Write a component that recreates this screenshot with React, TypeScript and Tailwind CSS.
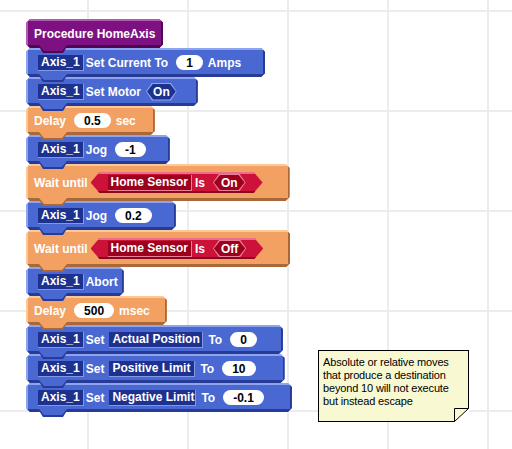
import type { ReactNode } from 'react';

type Tone = 'blue' | 'orange' | 'purple';

// block colours: body + bevel (light top/left, dark bottom/right)
const TONES: Record<Tone, { body: string; tabOuter: string; tabInner: string }> = {
  blue: {
    body: 'bg-[#4a68d2] shadow-[inset_2px_2px_0_#8fa4ee,inset_-2px_-3px_0_#263b96]',
    tabOuter: 'bg-[#263b96]',
    tabInner: 'bg-[#4a68d2]',
  },
  orange: {
    body: 'bg-[#f3a163] shadow-[inset_2px_2px_0_#fbc999,inset_-2px_-3px_0_#a9683a]',
    tabOuter: 'bg-[#a9683a]',
    tabInner: 'bg-[#f3a163]',
  },
  purple: {
    body: 'bg-[#7e1181] shadow-[inset_2px_2px_0_#b25bb5,inset_-2px_-3px_0_#4f0651]',
    tabOuter: 'bg-[#4f0651]',
    tabInner: 'bg-[#7e1181]',
  },
};

const CUT =
  '[clip-path:polygon(4px_0,calc(100%_-_4px)_0,100%_4px,100%_calc(100%_-_4px),calc(100%_-_4px)_100%,4px_100%,0_calc(100%_-_4px),0_4px)]';
const TRAP = '[clip-path:polygon(0_0,100%_0,calc(100%_-_5px)_100%,5px_100%)]';
const HEX9 =
  '[clip-path:polygon(9px_0,calc(100%_-_9px)_0,100%_50%,calc(100%_-_9px)_100%,9px_100%,0_50%)]';
const HEX6 =
  '[clip-path:polygon(6px_0,calc(100%_-_6px)_0,100%_50%,calc(100%_-_6px)_100%,6px_100%,0_50%)]';

function Block({
  tone,
  tall,
  pr,
  children,
}: {
  tone: Tone;
  tall?: boolean;
  pr: string;
  children: ReactNode;
}) {
  const t = TONES[tone];
  return (
    <div className={`relative ${tall ? 'h-[37px]' : 'h-[29px]'}`}>
      <div className={`flex h-full items-center gap-[5px] whitespace-nowrap pl-2 ${pr} ${t.body} ${CUT}`}>
        {children}
      </div>
      {/* connector tab that drops into the next block */}
      <div className={`absolute left-[12px] top-[calc(100%_-_3px)] z-10 h-[8px] w-[30px] ${t.tabOuter} ${TRAP}`}>
        <div className={`mx-[1px] h-[6px] ${t.tabInner} ${TRAP}`} />
      </div>
    </div>
  );
}

function Axis() {
  return (
    <span className="-mr-[3px] ml-[4px] flex h-[16px] items-center border-b border-r border-[#8297e6] bg-[#1d318f] px-[3px]">
      Axis_1
    </span>
  );
}

function Field({ w, children }: { w: string; children: ReactNode }) {
  return (
    <span className={`flex h-[16px] items-center border-b border-r border-[#8297e6] bg-[#1d318f] pl-[3px] ${w}`}>
      {children}
    </span>
  );
}

function Num({ children }: { children: ReactNode }) {
  return (
    <span className="ml-[3px] flex h-[15px] items-center rounded-full bg-white px-[10px] text-black">
      {children}
    </span>
  );
}

function BlueDrop({ children }: { children: ReactNode }) {
  return (
    <span className={`flex h-[18px] items-center bg-[#8fa4ee] p-[1px] ${HEX6}`}>
      <span className={`flex h-full items-center bg-[#1d318f] px-[6px] ${HEX6}`}>{children}</span>
    </span>
  );
}

function Sensor({ state }: { state: string }) {
  return (
    <div
      className={`-ml-[2px] flex h-[21px] items-center bg-[#cc1238] px-[17px] shadow-[inset_0_2px_0_#ec6e8a,inset_0_-2px_0_#85081f] ${HEX9}`}
    >
      <span className="flex h-[16px] items-center border-b border-r border-[#ea8098] bg-[#9c001c] px-[3px]">
        Home Sensor
      </span>
      <span className="ml-[3px]">Is</span>
      <span className={`ml-[8px] flex h-[17px] items-center bg-[#ea8098] p-[1px] ${HEX6}`}>
        <span className={`flex h-full items-center bg-[#9c001c] px-[7px] ${HEX6}`}>{state}</span>
      </span>
    </div>
  );
}

export default function App() {
  return (
    <div className="relative h-[449px] w-[512px] overflow-hidden bg-white bg-[linear-gradient(to_right,#ececec_2px,transparent_2px),linear-gradient(to_bottom,#ececec_2px,transparent_2px)] bg-[size:100px_100px] bg-[position:87px_10px] font-['Liberation_Sans',Arial,sans-serif]">
      {/* block stack */}
      <div className="absolute left-[26px] top-[19px] flex flex-col items-start text-[12px] font-bold leading-none text-white">
        <Block tone="purple" pr="pr-[8px]">
          <span>Procedure HomeAxis</span>
        </Block>
        <Block tone="blue" pr="pr-[24px]">
          <Axis />
          <span>Set Current To</span>
          <Num>1</Num>
          <span>Amps</span>
        </Block>
        <Block tone="blue" pr="pr-[21px]">
          <Axis />
          <span>Set Motor</span>
          <BlueDrop>On</BlueDrop>
        </Block>
        <Block tone="orange" pr="pr-[19px]">
          <span>Delay</span>
          <Num>0.5</Num>
          <span>sec</span>
        </Block>
        <Block tone="blue" pr="pr-[24px]">
          <Axis />
          <span>Jog</span>
          <Num>-1</Num>
        </Block>
        <Block tone="orange" tall pr="pr-[27px]">
          <span>Wait until</span>
          <Sensor state="On" />
        </Block>
        <Block tone="blue" pr="pr-[24px]">
          <Axis />
          <span>Jog</span>
          <Num>0.2</Num>
        </Block>
        <Block tone="orange" tall pr="pr-[27px]">
          <span>Wait until</span>
          <Sensor state="Off" />
        </Block>
        <Block tone="blue" pr="pr-[6px]">
          <Axis />
          <span>Abort</span>
        </Block>
        <Block tone="orange" pr="pr-[17px]">
          <span>Delay</span>
          <Num>500</Num>
          <span>msec</span>
        </Block>
        <Block tone="blue" pr="pr-[26px]">
          <Axis />
          <span>Set</span>
          <Field w="w-[94px]">Actual Position</Field>
          <span>To</span>
          <Num>0</Num>
        </Block>
        <Block tone="blue" pr="pr-[29px]">
          <Axis />
          <span>Set</span>
          <Field w="w-[86px]">Positive Limit</Field>
          <span>To</span>
          <Num>10</Num>
        </Block>
        <Block tone="blue" pr="pr-[28px]">
          <Axis />
          <span>Set</span>
          <Field w="w-[87px]">Negative Limit</Field>
          <span>To</span>
          <Num>-0.1</Num>
        </Block>
      </div>

      {/* comment note */}
      <div className="absolute left-[318px] top-[350px] h-[72px] w-[151px] border border-black bg-[#f8f8d2] pl-[4px] pt-[5px] text-[11px] leading-[13px] tracking-[-0.15px] text-black">
        <p>Absolute or relative moves</p>
        <p>that produce a destination</p>
        <p>beyond 10 will not execute</p>
        <p>but instead escape</p>
        <svg className="absolute -bottom-px -right-px" width="15" height="14" viewBox="0 0 15 14">
          <polygon points="15,0 15,14 0,14" fill="#ffffff" />
          <polygon points="0.5,0.5 14.5,0.5 0.5,13.5" fill="#f8f8d2" stroke="#000000" strokeWidth="1" />
        </svg>
      </div>
    </div>
  );
}
